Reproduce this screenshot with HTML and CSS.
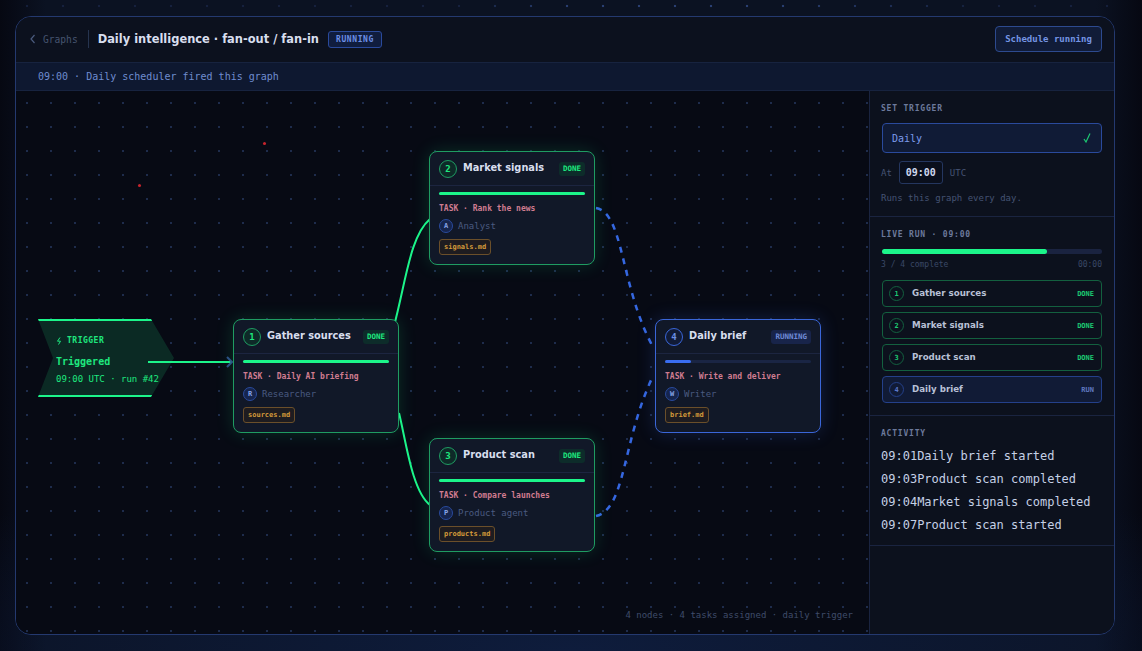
FILE: index.html
```html
<!DOCTYPE html>
<html lang="en">
  <head>
    <meta charset="UTF-8" />
    <title>Daily intelligence</title>
    <link rel="stylesheet" href="styles.css">
  </head>
  <body>
    <div class="app">
      <header class="topbar">
        <a class="back"><svg width="8" height="10" viewBox="0 0 8 10"><path d="M5.5 1 L2 5 L5.5 9" fill="none" stroke="#4a5a7d" stroke-width="1.2"/></svg>Graphs</a>
        <h1 class="graph-title">Daily intelligence · fan-out / fan-in</h1>
        <span class="status-pill">RUNNING</span>
        <button class="schedule-btn">Schedule running</button>
      </header>
      <div class="banner">09:00 · Daily scheduler fired this graph</div>

      <div class="main">
        <div class="canvas">
          <i class="spark spark-a"></i>
          <i class="spark spark-b"></i>

          <div class="trigger">
            <div class="trigger-label"><svg width="7" height="8" viewBox="0 0 7 8"><path d="M4 0.5 L1.5 4.2 H4.5 L2.5 7.5" fill="none" stroke="#1ee87f" stroke-width="1"/></svg>TRIGGER</div>
            <div class="trigger-name">Triggered</div>
            <div class="trigger-meta">09:00 UTC · run #42</div>
          </div>

          <svg class="edges" width="854" height="543" viewBox="0 0 854 543">
            <g fill="none" stroke-width="2">
              <path d="M132 271 H216" stroke="#1cf58a"/>
              <path d="M211 266 L216 271 L211 276" stroke="#2c4a86"/>
              <path d="M378 235 C390 190 394 145 414 128" stroke="#1cf58a"/>
              <path d="M383 322 C390 350 396 400 414 414" stroke="#1cf58a"/>
              <path d="M580 117 C608 122 604 195 637 256" stroke="#3567e0" stroke-width="2.5" stroke-dasharray="6 6"/>
              <path d="M580 425 C610 418 606 350 637 285" stroke="#3567e0" stroke-width="2.5" stroke-dasharray="6 6"/>
            </g>
          </svg>

          <div class="node done n1">
            <div class="node-head"><span class="num">1</span><span class="node-title">Gather sources</span><span class="badge">DONE</span></div>
            <div class="node-body">
              <div class="bar"><div class="fill" style="width: 100%"></div></div>
              <div class="task">TASK · Daily AI briefing</div>
              <div class="agent"><span class="avatar">R</span>Researcher</div>
              <span class="chip">sources.md</span>
            </div>
          </div>

          <div class="node done n2">
            <div class="node-head"><span class="num">2</span><span class="node-title">Market signals</span><span class="badge">DONE</span></div>
            <div class="node-body">
              <div class="bar"><div class="fill" style="width: 100%"></div></div>
              <div class="task">TASK · Rank the news</div>
              <div class="agent"><span class="avatar">A</span>Analyst</div>
              <span class="chip">signals.md</span>
            </div>
          </div>

          <div class="node done n3">
            <div class="node-head"><span class="num">3</span><span class="node-title">Product scan</span><span class="badge">DONE</span></div>
            <div class="node-body">
              <div class="bar"><div class="fill" style="width: 100%"></div></div>
              <div class="task">TASK · Compare launches</div>
              <div class="agent"><span class="avatar">P</span>Product agent</div>
              <span class="chip">products.md</span>
            </div>
          </div>

          <div class="node active n4">
            <div class="node-head"><span class="num">4</span><span class="node-title">Daily brief</span><span class="badge">RUNNING</span></div>
            <div class="node-body">
              <div class="bar"><div class="fill" style="width: 18%"></div></div>
              <div class="task">TASK · Write and deliver</div>
              <div class="agent"><span class="avatar">W</span>Writer</div>
              <span class="chip">brief.md</span>
            </div>
          </div>

          <div class="canvas-note">4 nodes · 4 tasks assigned · daily trigger</div>
        </div>

        <aside class="side">
          <section class="side-sec sec-trigger">
            <h2 class="sec-title">SET TRIGGER</h2>
            <div class="select"><span>Daily</span><svg width="8" height="10" viewBox="0 0 8 10"><path d="M1 6 L3 9 L7 0.5" fill="none" stroke="#1cc872" stroke-width="1.2"/></svg></div>
            <div class="at-row">At <span class="time">09:00</span> UTC</div>
            <p class="hint">Runs this graph every day.</p>
          </section>

          <section class="side-sec sec-live">
            <h2 class="sec-title">LIVE RUN · 09:00</h2>
            <div class="live-bar"><div class="live-fill" style="width: 75%"></div></div>
            <div class="live-meta"><span>3 / 4 complete</span><span>00:00</span></div>
            <div class="steps">
              <div class="step done"><span class="step-num">1</span><span class="step-name">Gather sources</span><span class="step-state">DONE</span></div>
              <div class="step done"><span class="step-num">2</span><span class="step-name">Market signals</span><span class="step-state">DONE</span></div>
              <div class="step done"><span class="step-num">3</span><span class="step-name">Product scan</span><span class="step-state">DONE</span></div>
              <div class="step active"><span class="step-num">4</span><span class="step-name">Daily brief</span><span class="step-state">RUN</span></div>
            </div>
          </section>

          <section class="side-sec sec-activity">
            <h2 class="sec-title">ACTIVITY</h2>
            <div class="log"><span>09:01</span><span>Daily brief started</span></div>
            <div class="log"><span>09:03</span><span>Product scan completed</span></div>
            <div class="log"><span>09:04</span><span>Market signals completed</span></div>
            <div class="log"><span>09:07</span><span>Product scan started</span></div>
          </section>
        </aside>
      </div>
    </div>
  </body>
</html>
```

FILE: styles.css
```css
html,
body {
  margin: 0;
  height: 100%;
}

body {
  position: relative;
  height: 651px;
  overflow: hidden;
  box-sizing: border-box;
  padding: 16px 27px 16px 15px;
  font-family: "DejaVu Sans Mono", "Liberation Mono", monospace;
  background-color: #070a14;
  background-image:
    radial-gradient(ellipse 70% 30% at 50% 100%, #0e1c3c, transparent),
    linear-gradient(90deg, #060812, #0b1222 4%, #0b1222 96%, #060812);
}

/* row of dots above the panel, brighter towards the right */
body::before {
  content: "";
  position: absolute;
  left: 0;
  top: 0;
  width: 100%;
  height: 14px;
  background-image:
    radial-gradient(circle, #2a3f72 1.2px, transparent 1.6px),
    radial-gradient(circle, #161f36 1px, transparent 1.3px);
  background-size: 36px 36px;
  background-position: 9px -12px;
  -webkit-mask-image: linear-gradient(90deg, rgba(0, 0, 0, 0.35) 40%, #000 50%, #000 68%, rgba(0, 0, 0, 0.35) 85%);
  mask-image: linear-gradient(90deg, rgba(0, 0, 0, 0.35) 40%, #000 50%, #000 68%, rgba(0, 0, 0, 0.35) 85%);
}

.app {
  display: flex;
  flex-direction: column;
  height: 619px;
  box-sizing: border-box;
  border: 1px solid #24396f;
  border-radius: 16px;
  overflow: hidden;
  background: #0b101c;
}

/* top bar */
.topbar {
  display: flex;
  align-items: center;
  height: 45px;
  flex: none;
  box-sizing: border-box;
  padding: 0 12px 1px 13px;
  background: #0c111e;
}

.back {
  display: flex;
  align-items: center;
  gap: 6px;
  height: 18px;
  padding-right: 10px;
  border-right: 1px solid #26344f;
  font-size: 9.6px;
  color: #46546f;
}

.graph-title {
  margin: 0 0 0 9px;
  font-family: "DejaVu Sans", Inter, sans-serif;
  font-size: 11.45px;
  font-weight: 700;
  color: #d8deee;
}

.status-pill {
  margin-left: 9px;
  padding: 3px 7px;
  border: 1px solid #2a4a9c;
  border-radius: 3px;
  background: #101d3e;
  font-size: 8px;
  font-weight: bold;
  letter-spacing: 0.6px;
  color: #6c8fe6;
}

.schedule-btn {
  margin-left: auto;
  width: 107px;
  height: 26px;
  padding: 0;
  border: 1px solid #2d4a8f;
  border-radius: 4px;
  background: #111c38;
  font-family: inherit;
  font-size: 9px;
  font-weight: bold;
  color: #7595e4;
}

.banner {
  flex: none;
  height: 29px;
  line-height: 28px;
  box-sizing: border-box;
  padding-left: 22px;
  border-top: 1px solid #17233f;
  border-bottom: 1px solid #17233f;
  background: #0e1830;
  font-size: 10px;
  color: #6e8ccf;
}

.main {
  display: flex;
  flex: 1;
  min-height: 0;
}

/* graph canvas */
.canvas {
  position: relative;
  flex: 1;
  background-color: #070a14;
  background-image: radial-gradient(circle, #1e2c4c 1px, transparent 1.2px);
  background-size: 24px 24px;
  background-position: -1px 0;
}

.edges {
  position: absolute;
  left: 0;
  top: 0;
}

.spark {
  position: absolute;
  width: 3px;
  height: 3px;
  border-radius: 50%;
  background: #c8242c;
}

.spark-a { left: 247px; top: 51px; }
.spark-b { left: 122px; top: 93px; }

.trigger {
  position: absolute;
  left: 22px;
  top: 228px;
  width: 136px;
  height: 78px;
  box-sizing: border-box;
  padding: 15px 0 0 18px;
  border-top: 2px solid #1cf58a;
  border-bottom: 2px solid #1cf58a;
  background: #0b2a24;
  clip-path: polygon(0 0, 113px 0, 136px 39px, 113px 78px, 0 78px, 15px 39px);
  color: #1ee87f;
}

.trigger-label {
  display: flex;
  align-items: center;
  gap: 4px;
  font-size: 8px;
  font-weight: bold;
  letter-spacing: 0.5px;
}

.trigger-name {
  margin-top: 11px;
  font-size: 10px;
  font-weight: bold;
}

.trigger-meta {
  margin-top: 7px;
  font-size: 9px;
}

.node {
  position: absolute;
  width: 166px;
  height: 114px;
  box-sizing: border-box;
  border: 1px solid #1f9c62;
  border-radius: 8px;
  background: #111828;
  box-shadow: 0 0 18px rgba(28, 245, 138, 0.16);
}

.node.active {
  border-color: #3a66d8;
  box-shadow: 0 0 18px rgba(58, 102, 216, 0.24);
}

.n1 { left: 217px; top: 228px; }
.n2 { left: 413px; top: 60px; }
.n3 { left: 413px; top: 347px; }
.n4 { left: 639px; top: 228px; }

.node-head {
  display: flex;
  align-items: center;
  height: 33px;
  padding: 0 9px;
  border-bottom: 1px solid #1c2540;
}

.num {
  display: flex;
  align-items: center;
  justify-content: center;
  width: 16px;
  height: 16px;
  border: 1px solid #1f9c62;
  border-radius: 50%;
  background: #0e2a28;
  font-size: 9px;
  font-weight: bold;
  color: #1ee87f;
}

.active .num {
  border-color: #3a66d8;
  background: #111b36;
  color: #6c8fe6;
}

.node-title {
  margin: 0 0 2px 6px;
  font-family: "DejaVu Sans", Inter, sans-serif;
  font-size: 9.8px;
  font-weight: 700;
  color: #d8deee;
}

.badge {
  margin-left: auto;
  padding: 3px 4px;
  border-radius: 3px;
  background: #0d2c2a;
  font-size: 7.5px;
  line-height: 8px;
  font-weight: bold;
  color: #1ee87f;
}

.active .badge {
  background: #18244a;
  color: #6f8bd8;
}

.node-body {
  padding: 6px 9px;
}

.bar {
  height: 3px;
  border-radius: 2px;
  background: #1a2544;
}

.fill {
  height: 3px;
  border-radius: 2px;
  background: #1cf58a;
}

.active .fill {
  background: #3a6df0;
}

.task {
  margin-top: 9px;
  font-size: 8px;
  font-weight: bold;
  color: #d07c90;
}

.agent {
  display: flex;
  align-items: center;
  gap: 5px;
  margin-top: 6px;
  font-size: 9px;
  color: #4a5a80;
}

.avatar {
  display: flex;
  align-items: center;
  justify-content: center;
  width: 12px;
  height: 12px;
  border: 1px solid #2a4a9c;
  border-radius: 50%;
  background: #16254e;
  font-size: 7px;
  font-weight: bold;
  color: #8aa5ea;
}

.chip {
  display: inline-block;
  margin-top: 6px;
  padding: 3px 4px;
  border: 1px solid #6b4f2a;
  border-radius: 3px;
  background: #1e1c20;
  font-size: 7px;
  font-weight: bold;
  color: #d39a3a;
}

.canvas-note {
  position: absolute;
  right: 16px;
  bottom: 14px;
  font-size: 9px;
  color: #3f4c6a;
}

/* right panel */
.side {
  flex: none;
  width: 245px;
  box-sizing: border-box;
  border-left: 1px solid #1a2440;
  background: #0c111d;
}

.side-sec {
  box-sizing: border-box;
  padding: 13px 12px 0 11px;
  border-bottom: 1px solid #1a2440;
}

.sec-trigger { height: 126px; }
.sec-live { height: 199px; }
.sec-activity { height: 130px; }

.sec-title {
  margin: 0;
  font-size: 8px;
  font-weight: bold;
  letter-spacing: 0.8px;
  color: #6c7a9c;
}

.select {
  display: flex;
  justify-content: space-between;
  align-items: center;
  height: 30px;
  box-sizing: border-box;
  margin: 10px 0 0 1px;
  padding: 0 10px 0 9px;
  border: 1px solid #2a4a9c;
  border-radius: 4px;
  background: #101b36;
  font-size: 10px;
  color: #7c9aec;
}

.at-row {
  display: flex;
  align-items: center;
  gap: 7px;
  margin-top: 8px;
  font-size: 9px;
  color: #455373;
}

.time {
  width: 44px;
  height: 23px;
  line-height: 21px;
  box-sizing: border-box;
  border: 1px solid #24365f;
  border-radius: 3px;
  background: #0a0f1c;
  text-align: center;
  font-size: 10px;
  font-weight: bold;
  color: #cfd8ee;
}

.hint {
  margin: 9px 0 0;
  font-size: 9px;
  color: #455373;
}

.live-bar {
  height: 5px;
  margin: 10px 0 0 1px;
  border-radius: 3px;
  background: #1a2340;
}

.live-fill {
  height: 5px;
  border-radius: 3px;
  background: #1cf58a;
}

.live-meta {
  display: flex;
  justify-content: space-between;
  margin-top: 6px;
  font-size: 8px;
  color: #3a4866;
}

.steps {
  display: flex;
  flex-direction: column;
  gap: 5px;
  margin: 11px 0 0 1px;
}

.step {
  display: flex;
  align-items: center;
  height: 27px;
  box-sizing: border-box;
  padding: 0 7px 0 6px;
  border: 1px solid #13603f;
  border-radius: 4px;
}

.step.active {
  border-color: #24408a;
  background: #111b36;
}

.step-num {
  display: flex;
  align-items: center;
  justify-content: center;
  width: 15px;
  height: 15px;
  box-sizing: border-box;
  border: 1px solid #13603f;
  border-radius: 50%;
  font-size: 7px;
  font-weight: bold;
  color: #1cc872;
}

.active .step-num {
  border-color: #24408a;
  color: #5c78c8;
}

.step-name {
  margin: 0 0 1px 8px;
  font-family: "DejaVu Sans", Inter, sans-serif;
  font-size: 8.7px;
  font-weight: 700;
  color: #b8c0d6;
}

.step-state {
  margin-left: auto;
  font-size: 7px;
  font-weight: bold;
  color: #1cc872;
}

.active .step-state {
  color: #6079c0;
}

.log {
  margin-top: 5px;
  height: 18px;
  line-height: 18px;
  font-size: 12px;
  color: #c5d0e6;
}

.sec-activity .sec-title {
  margin-bottom: 9px;
}
```
